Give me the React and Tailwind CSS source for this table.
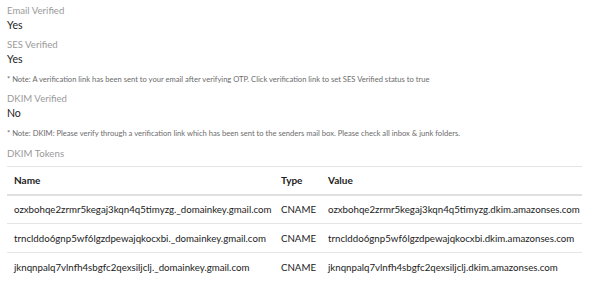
import React from "react";

const tokens = [
  "ozxbohqe2zrmr5kegaj3kqn4q5timyzg",
  "trnclddo6gnp5wf6lgzdpewajqkocxbi",
  "jknqnpalq7vlnfh4sbgfc2qexsiljclj",
];

const Field = ({ label, value }) => (
  <div className="mb-[6px]">
    <div className="text-[9.6px] leading-[14px] text-[#9a9a9a]">{label}</div>
    <div className="text-[10.5px] leading-[14px] text-[#222]">{value}</div>
  </div>
);

const App = () => {
  return (
    <div className="bg-white px-[7px] pt-[4px] font-['Lato',sans-serif] w-[598px] h-[283px] overflow-hidden">
      <Field label="Email Verified" value="Yes" />
      <Field label="SES Verified" value="Yes" />
      <p className="text-[7.6px] leading-[10px] text-[#6c6c6c] mt-[8px] mb-[8px]">
        * Note: A verification link has been sent to your email after verifying OTP. Click verification link to set SES Verified status to true
      </p>
      <Field label="DKIM Verified" value="No" />
      <p className="text-[7.6px] leading-[10px] text-[#6c6c6c] mt-[8px] mb-[8px]">
        * Note: DKIM: Please verify through a verification link which has been sent to the senders mail box. Please check all inbox &amp; junk folders.
      </p>
      <div className="text-[9.7px] leading-[14px] text-[#9a9a9a] mb-[6px]">DKIM Tokens</div>
      <table className="w-[575px] table-fixed text-[9.7px] text-[#222] border-collapse">
        <colgroup>
          <col className="w-[267px]" />
          <col className="w-[47px]" />
          <col />
        </colgroup>
        <thead>
          <tr className="border-t border-[#e5e5e5] border-b-2 border-b-[#e0e0e0]">
            <th className="text-left font-bold px-[7px] h-[28px] text-[10px]">Name</th>
            <th className="text-left font-bold px-[7px] text-[10px]">Type</th>
            <th className="text-left font-bold px-[7px] text-[10px]">Value</th>
          </tr>
        </thead>
        <tbody>
          {tokens.map((t) => (
            <tr key={t} className="border-b border-[#e5e5e5] last:border-b-0">
              <td className="px-[7px] h-[29px] whitespace-nowrap">{t}._domainkey.gmail.com</td>
              <td className="px-[7px]">CNAME</td>
              <td className="px-[7px] whitespace-nowrap">{t}.dkim.amazonses.com</td>
            </tr>
          ))}
        </tbody>
      </table>
    </div>
  );
};

export default App;
